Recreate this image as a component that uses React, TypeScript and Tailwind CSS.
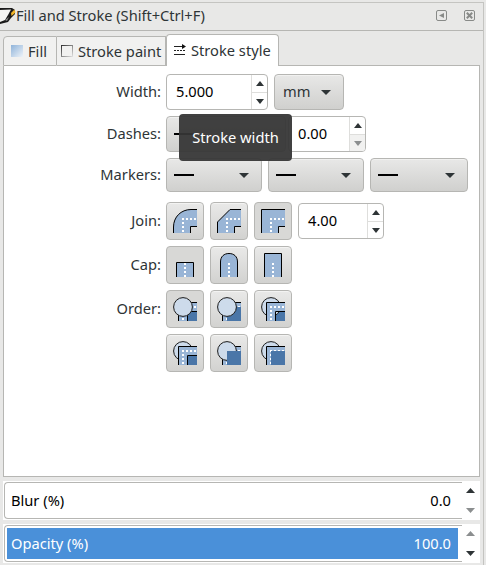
import React from "react";

const EDGE = "border-[#b6b6b3]";

function Tri({ up = false, dim = false, size = "h-[5px] w-2" }: { up?: boolean; dim?: boolean; size?: string }) {
  return (
    <svg viewBox="0 0 10 5" preserveAspectRatio="none" className={`shrink-0 ${size}`}>
      <path d={up ? "M0 5L5 0L10 5Z" : "M0 0H10L5 5Z"} fill={dim ? "#8b8e8f" : "#2e3436"} />
    </svg>
  );
}

function Spin({ value, className, dimDown = false }: { value: string; className: string; dimDown?: boolean }) {
  return (
    <div className={`flex h-9 overflow-hidden rounded-[4px] border bg-white ${EDGE} ${className}`}>
      <div className="flex flex-1 items-center pb-[2px] pl-[9px] text-black">{value}</div>
      <div className="flex w-4 flex-col border-l border-[#dededc]">
        <div className="flex h-[17px] items-center justify-center pb-px">
          <Tri up />
        </div>
        <div className={`flex flex-1 items-center justify-center border-t border-[#dededc] pt-px ${dimDown ? "bg-[#f1f1f0]" : ""}`}>
          <Tri dim={dimDown} />
        </div>
      </div>
    </div>
  );
}

function Combo({ className, children }: { className: string; children?: React.ReactNode }) {
  return (
    <div className={`flex items-center justify-between rounded-[4px] border bg-linear-to-b from-[#e8e8e7] to-[#d0d0ce] shadow-[inset_0_1px_0_#f1f1f0] ${EDGE} ${className}`}>
      {children}
      <Tri size="mt-px h-[5px] w-[10px]" />
    </div>
  );
}

function Toggle({ on = false, children }: { on?: boolean; children: React.ReactNode }) {
  return (
    <div className={`flex size-[38px] items-center justify-center rounded-[4px] border ${EDGE} ${on ? "bg-[#d8d8d6]" : "bg-linear-to-b from-[#e9e9e8] to-[#d2d2d0] shadow-[inset_0_1px_0_#f3f3f2]"}`}>
      <svg width="24" height="24" viewBox="0 0 24 24" fill="none">
        {children}
      </svg>
    </div>
  );
}

function Join({ shape }: { shape: string }) {
  return (
    <>
      <path d={`${shape}V17.5H17.5V24H.5Z`} fill="#99b5d6" />
      <path d={shape} stroke="#000" />
      <path d="M17.5 24V17.5H24" stroke="#000" />
      <path d="M10 9V24M13 10H24" stroke="#fff" strokeWidth="2" strokeDasharray="2 2" />
    </>
  );
}

function Cap({ shape, dots }: { shape: string; dots: string }) {
  return (
    <>
      <path d={shape} fill="#99b5d6" stroke="#000" />
      <path d={dots} stroke="#fff" strokeWidth="2" strokeDasharray="2 2" />
    </>
  );
}

const Marker = () => <circle cx="10" cy="10" r="9.4" fill="#cddbeb" stroke="#1b1b1b" />;
const Stroke = () => (
  <>
    <path d="M5 5H24V14H14V24H5Z" fill="#99b5d6" />
    <path d="M5.5 24V5.5H24" stroke="#000" />
    <path d="M10 9V24M13 10H24" stroke="#fff" strokeWidth="2" strokeDasharray="2 2" />
    <path d="M14.5 24V14.5H24" stroke="#000" />
  </>
);
const FillArea = () => <path d="M10 10H24V24H10Z" fill="#4a76a8" />;
const InnerFill = () => <path d="M15 15H24V24H15Z" fill="#4a76a8" />;

function Row({ label, gap, h, children }: { label: string; gap: string; h: string; children: React.ReactNode }) {
  return (
    <div className={`flex ${h} ${gap}`}>
      <div className="mr-[5px] flex w-[157px] shrink-0 items-center justify-end pb-[2px]">{label}</div>
      {children}
    </div>
  );
}

function Slider({ label, value, full = false }: { label: string; value: string; full?: boolean }) {
  return (
    <div className="ml-[3px] flex h-[39px] w-[477px] bg-white">
      <div className={`my-px ml-px flex w-[458px] rounded-l-[4px] border-y border-l p-[2px] ${EDGE}`}>
        <div className={`flex flex-1 items-center justify-between pb-[2px] pl-1 ${full ? "mr-[2px] bg-[#4a90d9] pr-[7px] text-white" : "pr-[9px] text-black"}`}>
          <span>{label}</span>
          <span>{value}</span>
        </div>
      </div>
      <div className="flex flex-1 flex-col items-center justify-between pt-[7px] pr-px pb-[7px]">
        <Tri up dim={full} size="h-[5px] w-[9px]" />
        <Tri dim={!full} size="h-[5px] w-[9px]" />
      </div>
    </div>
  );
}

const Dash = () => <span className="h-[2px] w-5 bg-black" />;

export default function App() {
  return (
    <div className="relative h-[565px] w-[486px] overflow-hidden bg-[#e8e8e7] font-['Noto_Sans',sans-serif] text-[14.67px] leading-5 text-[#2e3436]">
      <div className="mt-[2px] h-[570px] w-[484px] border-t border-r border-[#c4c4c1]">
        <div className="flex h-7 items-center border-b border-[#b6b6b3] pb-[2px]">
          <svg width="16" height="16" viewBox="0 0 16 16" className="shrink-0">
            <path d="M0 0H12L15 2V6L11 10L8 14L0 16Z" fill="#1a1a1a" />
            <path d="M0 2L11 1.5L8 7L5 12L0 14Z" fill="#f4f4f2" />
            <path d="M11 5L14.5 1.5L15.5 4.5L11.5 8Z" fill="#f0b429" />
            <path d="M5 12L9 9L7 13Z" fill="#8a8a8a" />
          </svg>
          <span className="flex-1 pb-[2px] tracking-[-0.03px]">Fill and Stroke (Shift+Ctrl+F)</span>
          <svg width="12" height="12" viewBox="0 0 12 12" className="mr-4">
            <rect x=".5" y=".5" width="10" height="10" rx="1.5" fill="none" stroke="#888a88" />
            <path d="M8 3V8L3 5.5Z" fill="#888a88" />
          </svg>
          <svg width="12" height="12" viewBox="0 0 12 12" className="mr-[7px]">
            <rect x=".5" y=".5" width="10" height="10" rx="1.5" fill="none" stroke="#888a88" />
            <path d="M2.8 2.8L8.2 8.2M8.2 2.8L2.8 8.2" stroke="#888a88" strokeWidth="2" />
          </svg>
        </div>
        <div className="ml-[3px] flex h-[35px] items-end">
          <div className={`flex h-[30px] w-[54px] items-center rounded-tl-[4px] border bg-[#f1f1f0] pl-[7px] ${EDGE}`}>
            <span className="mr-[5px] size-3 bg-linear-to-br from-[#8fb3d9] to-[#eef3f8]" />
            Fill
          </div>
          <div className={`flex h-[30px] w-[109px] items-center border-y border-r bg-[#f1f1f0] pl-1 ${EDGE}`}>
            <svg width="12" height="12" viewBox="0 0 12 12" className="mr-[5px] shrink-0">
              <defs>
                <linearGradient id="edge" x2="1" y2="1">
                  <stop stopColor="#333" />
                  <stop offset="1" stopColor="#ddd" />
                </linearGradient>
              </defs>
              <rect x=".5" y=".5" width="11" height="11" fill="none" stroke="url(#edge)" />
            </svg>
            <span className="whitespace-nowrap">Stroke paint</span>
          </div>
          <div className={`flex h-8 w-[113px] items-center rounded-t-[4px] border-x border-t bg-white pb-[2px] pl-[6px] ${EDGE}`}>
            <svg width="13" height="12" viewBox="0 0 13 12" className="mr-[5px] shrink-0">
              <path d="M1 2.5H12M1 10.5H12" stroke="#222" />
              <path d="M1 6.5H12" stroke="#222" strokeDasharray="2 1" />
              <path d="M9 0L13 2.5L9 5Z" fill="#111" />
            </svg>
            <span className="whitespace-nowrap">Stroke style</span>
          </div>
          <div className={`h-px w-[201px] border-t ${EDGE}`} />
        </div>
        <div className={`ml-[3px] h-[411px] w-[477px] border-x border-b bg-white pt-2 ${EDGE}`}>
          <Row label="Width:" h="h-9" gap="mb-[6px]">
            <Spin value="5.000" className="w-[102px]" />
            <Combo className="ml-[6px] w-[70px] pr-3 pl-2"><span className="pb-[2px]">mm</span></Combo>
          </Row>
          <Row label="Dashes:" h="h-9" gap="mb-[6px]">
            <Combo className="w-[120px] pr-3 pl-[7px]"><Dash /></Combo>
            <Spin value="0.00" className="ml-[2px] w-[78px]" dimDown />
          </Row>
          <Row label="Markers:" h="h-[34px]" gap="mb-[10px]">
            <Combo className="w-24 pr-3 pl-[7px]"><Dash /></Combo>
            <Combo className="ml-[6px] w-24 pr-3 pl-[7px]"><Dash /></Combo>
            <Combo className="ml-[6px] w-[98px] pr-3 pl-[7px]"><Dash /></Combo>
          </Row>
          <Row label="Join:" h="h-[38px]" gap="mb-[6px]">
            <div className="flex gap-[6px]">
              <Toggle><Join shape="M.5 24V18C.5 8 8 .5 18 .5H24" /></Toggle>
              <Toggle><Join shape="M.5 24V13L13 .5H24" /></Toggle>
              <Toggle on><Join shape="M.5 24V.5H24" /></Toggle>
            </div>
            <Spin value="4.00" className="mt-px ml-[6px] w-[86px]" />
          </Row>
          <Row label="Cap:" h="h-[38px]" gap="mb-[6px]">
            <div className="flex gap-[6px]">
              <Toggle on><Cap shape="M3.5 24V9.5H20.5V24" dots="M12 10V24" /></Toggle>
              <Toggle><Cap shape="M3.5 24V9C3.5 3.5 7 .5 12 .5S20.5 3.5 20.5 9V24" dots="M12 10V24" /></Toggle>
              <Toggle><Cap shape="M3.5 24V.5H20.5V24" dots="M12 10V24" /></Toggle>
            </div>
          </Row>
          <Row label="Order:" h="h-[38px]" gap="mb-[6px]">
            <div className="flex gap-[6px]">
              <Toggle on><InnerFill /><Stroke /><Marker /></Toggle>
              <Toggle><Stroke /><FillArea /><Marker /></Toggle>
              <Toggle><InnerFill /><Marker /><Stroke /></Toggle>
            </div>
          </Row>
          <Row label="" h="h-[38px]" gap="">
            <div className="flex gap-[6px]">
              <Toggle><Marker /><InnerFill /><Stroke /></Toggle>
              <Toggle><Stroke /><Marker /><FillArea /></Toggle>
              <Toggle><Marker /><Stroke /><FillArea /></Toggle>
            </div>
          </Row>
        </div>
        <div className="mt-1 flex flex-col gap-1">
          <Slider label="Blur (%)" value="0.0" />
          <Slider label="Opacity (%)" value="100.0" full />
        </div>
      </div>
      <div className="absolute top-[114px] left-[179px] flex h-[47px] w-[113px] items-center justify-center rounded-[4px] bg-[#353535]/94 pb-[2px] text-white">
        Stroke width
      </div>
    </div>
  );
}
